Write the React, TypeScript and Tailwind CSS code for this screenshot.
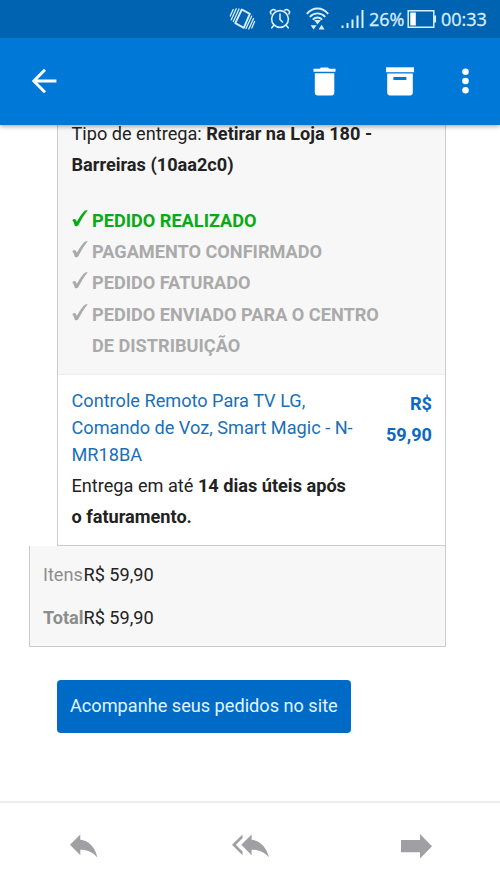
import { ReactNode } from 'react';

const steps = [
  { lines: ['PEDIDO REALIZADO'], done: true },
  { lines: ['PAGAMENTO CONFIRMADO'], done: false },
  { lines: ['PEDIDO FATURADO'], done: false },
  { lines: ['PEDIDO ENVIADO PARA O CENTRO', 'DE DISTRIBUIÇÃO'], done: false },
];

const StatusBar = () => (
  <div className="flex h-[38px] shrink-0 items-center bg-[#0063b1] pl-[229px] text-[#d9efff]">
    <svg width="28" height="24" viewBox="0 0 28 24" fill="none" stroke="currentColor" strokeWidth="1.3" strokeLinecap="round">
      <path d="M12.8 2.500 20.800 6.800 14.800 20.800 6.300 16.200Z" strokeWidth="1.9" strokeLinejoin="round" />
      <path d="M10 2 4.300 14.500M7.200 1.800 2.200 12.800M4.200 2.500 1.200 9M17 21.500 22.600 9.200M19.800 22 24.500 11.500M22.800 21 25.600 14.500" />
    </svg>
    <svg className="ml-3" width="22" height="24" viewBox="0 0 22 24" fill="none" stroke="currentColor" strokeWidth="1.6" strokeLinecap="round">
      <circle cx="11" cy="12" r="8.4" />
      <path d="M11 7v5.500l2.500 2.500M2 6.800C.2 4.600 3.800 1.200 6.200 3.100M20 6.800C21.800 4.600 18.200 1.200 15.800 3.100M4.800 18.200 2.800 20.800M17.200 18.200l2 2.600" />
    </svg>
    <svg className="ml-[15px]" width="23" height="24" viewBox="0 0 23 24" fill="none" stroke="currentColor" strokeWidth="1.9">
      <path d="M.8 6.800C7-.2 16-.2 22.200 6.800M3.800 9.800c4.400-4.600 11-4.600 15.400 0M6.800 12.600c2.900-2.700 6.500-2.700 9.400 0" />
      <path d="M8.100 13h6.800l-3.400 4.400zM4.600 18.300h6l-3 4.200zM15.600 17.800l3 4.700h-6z" fill="currentColor" stroke="none" />
    </svg>
    <svg className="ml-3" width="23" height="24" viewBox="0 0 23 24" stroke="currentColor" strokeWidth="2">
      <path d="M1.500 18.500v2.500M6.500 16V21M11.500 12.500V21M16.500 8.500V21M21.500 3v18" />
    </svg>
    <span className="ml-[5px] w-[38px] font-['Open_Sans',sans-serif] text-[18px] leading-[38px] [-webkit-text-stroke:0.3px]">26%</span>
    <svg width="30" height="24" viewBox="0 0 30 24" fill="none" stroke="currentColor" strokeWidth="1.5">
      <path d="M1.200 3.800h25.600v16.400H1.200zM28.300 8.500v7" />
      <path d="M3.300 5.500h5.500v13H3.300z" fill="white" stroke="none" />
    </svg>
    <span className="ml-1 font-['Open_Sans',sans-serif] text-[18px] leading-[38px] [-webkit-text-stroke:0.3px]">00:33</span>
  </div>
);

const Toolbar = () => (
  <div className="flex h-[87px] shrink-0 items-center bg-[#0078d7] pb-px pl-8 text-white">
    <svg width="25" height="26" viewBox="0 0 25 26" fill="none" stroke="currentColor" strokeWidth="3">
      <path d="M13 1.800 1.800 13 13 24.200M1.500 13H24.400" />
    </svg>
    <svg className="ml-64" width="23" height="29" viewBox="0 0 23 29" fill="currentColor">
      <path d="M.5 1.700h6.300L8 .4h7l1.200 1.300h6.300v3H.5zM1.800 6.300h19.500v19.200a3 3 0 0 1-3 3H4.800a3 3 0 0 1-3-3z" />
    </svg>
    <svg className="ml-[50px]" width="28" height="29" viewBox="0 0 28 29" fill="currentColor">
      <path d="M0 .3h28v4.900H0z" />
      <path fillRule="evenodd" d="M1.200 6.400h25.600v19.100a3 3 0 0 1-3 3H4.200a3 3 0 0 1-3-3zM7.400 10v3h13v-3z" />
    </svg>
    <svg className="ml-12" width="7" height="26" viewBox="0 0 7 26" fill="currentColor">
      <circle cx="3.500" cy="3.800" r="3.300" />
      <circle cx="3.500" cy="13" r="3.300" />
      <circle cx="3.500" cy="22.200" r="3.300" />
    </svg>
  </div>
);

const Step = ({ lines, done }: { lines: string[]; done: boolean }) => (
  <li className={`flex font-bold ${done ? 'text-[#09aa13]' : 'text-[#aaaaaa]'}`}>
    <svg className="mt-[5px] mr-[4.5px] shrink-0" width="16" height="17" viewBox="0 0 16 17" fill="currentColor">
      <path d="M.3 10.300C1.200 8.800 3 8.300 3.800 9.800l1.100 2C7.200 7.500 9.500 4 12.200 1.200 13.200.3 14.500.2 15.800.3 12 4.800 9.200 9.500 6.600 14.800 5.300 16.800 3 16.800 2.600 15.300 2 13.200 1.500 11.500.3 10.300z" />
    </svg>
    <div>
      {lines.map((line) => (
        <div key={line}>{line}</div>
      ))}
    </div>
  </li>
);

const TotalRow = ({ label, children }: { label: ReactNode; children: ReactNode }) => (
  <div className="flex">
    <span className="w-[40.5px] text-[#8d8d8d]">{label}</span>
    <span>{children}</span>
  </div>
);

export default function App() {
  return (
    <div className="flex h-[889px] w-[500px] flex-col overflow-hidden bg-white font-[Roboto,sans-serif] text-[18.15px] leading-[31.2px] whitespace-nowrap text-[#222222]">
      <header className="relative z-10 shadow-[0_1px_5px_rgba(0,0,0,0.4)]">
        <StatusBar />
        <Toolbar />
      </header>

      <main className="flex-1">
        <section className="-mt-2 ml-[57px] h-[429px] w-[389px] border border-t-0 border-[#cccccc]">
          <div className="h-[258px] border-b border-[#eeeeee] bg-[#f7f7f7] pt-[0.5px] pl-[13.5px]">
            <p>
              Tipo de entrega: <b>Retirar na Loja 180 -</b>
              <br />
              <b>Barreiras (10aa2c0)</b>
            </p>
            <ul className="mt-[25px]">
              {steps.map((step) => (
                <Step key={step.lines[0]} {...step} />
              ))}
            </ul>
          </div>
          <div className="flex justify-between pt-3 pr-[13px] pl-[13.5px]">
            <div>
              <p className="leading-[27px] text-[#1a70b5]">
                Controle Remoto Para TV LG,
                <br />
                Comando de Voz, Smart Magic - N-
                <br />
                MR18BA
              </p>
              <p className="mt-[2px]">
                Entrega em até <b>14 dias úteis após</b>
                <br />
                <b>o faturamento.</b>
              </p>
            </div>
            <p className="mt-px text-right font-bold text-[#0d69bf]">
              R$
              <br />
              59,90
            </p>
          </div>
        </section>

        <section className="ml-[29px] flex h-[101px] w-[417px] flex-col gap-3 border border-t-0 border-[#cccccc] bg-[#f7f7f7] pt-[13px] pl-[13px]">
          <TotalRow label="Itens">R$ 59,90</TotalRow>
          <TotalRow label={<b>Total</b>}>R$ 59,90</TotalRow>
        </section>

        <button className="mt-[33px] ml-[57px] block h-[53px] w-[294px] rounded bg-[#006bc7] pb-px pl-[13px] text-left text-[#e0f5ff]">
          Acompanhe seus pedidos no site
        </button>
      </main>

      <footer className="flex h-[88px] shrink-0 items-center border-t-2 border-[#eeeeee] pl-[70px] text-[#a0a0a4]">
        <svg width="28" height="24" viewBox="0 0 28 24" fill="currentColor">
          <path d="M0 10.800 10.300.5v5.300c8 .6 15 7.200 17 17.700-5.200-5.900-10.700-7.800-17-7.700v5.500z" />
        </svg>
        <svg className="ml-[134px]" width="38" height="24" viewBox="0 0 38 24" fill="currentColor">
          <path d="M0 10.800 10.500.5v3.700L3.800 10.800l6.700 6.700v3.800zM9.300 10.800 19.600.5v5.300c8 .6 15.200 7.200 17.300 17.700-5.200-5.900-11-7.800-17.300-7.700v5.500z" />
        </svg>
        <svg className="ml-[131px]" width="31" height="25" viewBox="0 0 31 25" fill="currentColor">
          <path d="M0 6h19V0l12 12.200L19 24.500v-6.200H0z" />
        </svg>
      </footer>
    </div>
  );
}
